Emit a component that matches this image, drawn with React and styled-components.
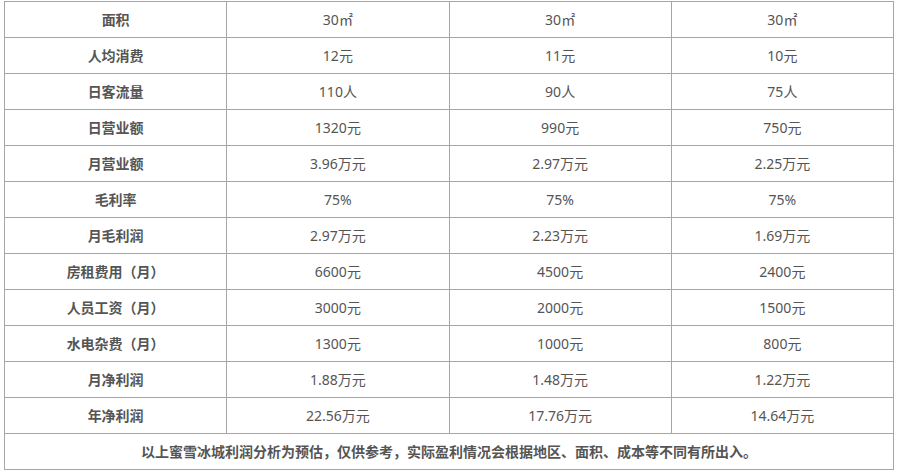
import React from "react";
import styled, { createGlobalStyle } from "styled-components";

const Global = createGlobalStyle`
  html, body { margin: 0; padding: 0; background: #fff; }
  body { font-family: "Noto Sans", "Noto Sans CJK SC", sans-serif; }
`;

const Wrap = styled.div`
  padding: 1px 0 0 4px;
`;

const Table = styled.table`
  border-collapse: collapse;
  width: 890px;
  table-layout: fixed;
  color: #555;
  font-size: 14px;
`;

const Cell = styled.td`
  border: 1px solid #a6a6a6;
  height: 35px;
  padding: 0;
  text-align: center;
  vertical-align: middle;
  font-weight: ${(p) => (p.$bold ? 700 : 400)};
  line-height: 20px;
  white-space: nowrap;
`;

const rows = [
  ["面积", "30㎡", "30㎡", "30㎡"],
  ["人均消费", "12元", "11元", "10元"],
  ["日客流量", "110人", "90人", "75人"],
  ["日营业额", "1320元", "990元", "750元"],
  ["月营业额", "3.96万元", "2.97万元", "2.25万元"],
  ["毛利率", "75%", "75%", "75%"],
  ["月毛利润", "2.97万元", "2.23万元", "1.69万元"],
  ["房租费用（月）", "6600元", "4500元", "2400元"],
  ["人员工资（月）", "3000元", "2000元", "1500元"],
  ["水电杂费（月）", "1300元", "1000元", "800元"],
  ["月净利润", "1.88万元", "1.48万元", "1.22万元"],
  ["年净利润", "22.56万元", "17.76万元", "14.64万元"],
];

export default function App() {
  return (
    <Wrap>
      <Global />
      <Table>
        <tbody>
          {rows.map((r) => (
            <tr key={r[0]}>
              <Cell $bold>{r[0]}</Cell>
              <Cell>{r[1]}</Cell>
              <Cell>{r[2]}</Cell>
              <Cell>{r[3]}</Cell>
            </tr>
          ))}
          <tr>
            <Cell $bold colSpan={4}>
              以上蜜雪冰城利润分析为预估，仅供参考，实际盈利情况会根据地区、面积、成本等不同有所出入。
            </Cell>
          </tr>
        </tbody>
      </Table>
    </Wrap>
  );
}
